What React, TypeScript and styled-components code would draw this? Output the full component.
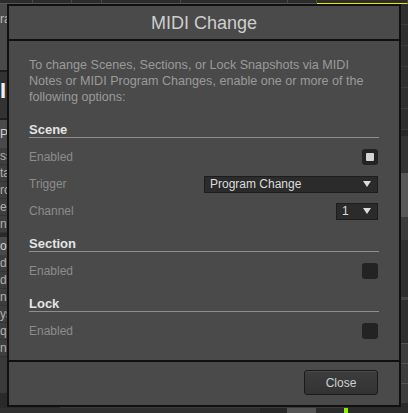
import React from "react";
import styled, { createGlobalStyle } from "styled-components";

const Global = createGlobalStyle`
  html, body { margin: 0; padding: 0; background: #2a2a2a; }
  body { font-family: "Liberation Sans", Arial, sans-serif; }
  * { box-sizing: border-box; }
`;

const Screen = styled.div`
  position: relative;
  width: 408px;
  height: 413px;
  overflow: hidden;
  display: grid;
  grid-template-rows: 4px 1fr 5px;
  background: #2a2a2a;
`;

/* ---------- background app ---------- */
const TopBar = styled.div`
  display: flex;
`;
const TopSeg = styled.div<{ $w: number; $accent?: boolean }>`
  width: ${(p) => p.$w}px;
  flex: ${(p) => (p.$w ? "none" : "1")};
  background: #2c2c2c;
  border-right: 1px solid #4a4a4a;
  border-bottom: 1px solid ${(p) => (p.$accent ? "#f2e600" : "#555")};
`;

const Main = styled.div`
  display: flex;
  min-height: 0;
`;
const LeftStrip = styled.div`
  width: 60px;
  flex: none;
  display: flex;
  flex-direction: column;
  font-size: 12px;
`;
const Panel = styled.div<{ $h: number; $bg: string; $color?: string }>`
  height: ${(p) => p.$h}px;
  flex: none;
  background: ${(p) => p.$bg};
  color: ${(p) => p.$color || "#bdbdbd"};
  display: flex;
  align-items: center;
  overflow: hidden;
  white-space: nowrap;
`;
const TopPanelText = styled(Panel)`
  align-items: flex-start;
  padding-top: 8px;
`;
const BigGlyph = styled.span`
  font-size: 22px;
  font-weight: bold;
  color: #f0f0f0;
  margin-top: -8px;
`;
const ListRow = styled.div`
  height: 17px;
  flex: none;
  background: #3e3e3e;
  border-bottom: 1px solid #333;
  color: #b0b0b0;
  display: flex;
  align-items: center;
  overflow: hidden;
`;
const Filler = styled.div<{ $bg: string }>`
  flex: 1;
  background: ${(p) => p.$bg};
`;
const Center = styled.div`
  flex: 1;
  background: #3a3a3a;
`;
const RightStrip = styled.div`
  width: 60px;
  flex: none;
  display: flex;
  flex-direction: column;
  font-size: 12px;
`;
const TrackRow = styled.div`
  height: 21px;
  flex: none;
  background: #2e2e2e;
  border-bottom: 1px solid #3b3b3b;
`;
const RightRow = styled.div`
  height: 20px;
  flex: none;
  background: #3d3d3d;
  border-top: 1px solid #555;
  color: #e0e0e0;
  font-size: 13px;
  display: flex;
  align-items: center;
  padding-left: 194px;
`;
const RightText = styled(Panel)<{ $top?: boolean }>`
  padding-left: 194px;
  align-items: ${(p) => (p.$top ? "flex-start" : "center")};
  padding-top: ${(p) => (p.$top ? "3px" : "0")};
`;

const BottomBar = styled.div`
  display: flex;
`;
const BottomSeg = styled.div<{ $w?: number; $bg: string }>`
  width: ${(p) => (p.$w ? `${p.$w}px` : "auto")};
  flex: ${(p) => (p.$w ? "none" : "1")};
  background: ${(p) => p.$bg};
`;

/* ---------- dialog ---------- */
const Dialog = styled.div`
  position: absolute;
  left: 7px;
  top: 4px;
  width: 394px;
  height: 403px;
  border: 2px solid #101010;
  background: #4a4a4a;
  display: flex;
  flex-direction: column;
`;
const TitleBar = styled.div`
  height: 35px;
  flex: none;
  border-bottom: 2px solid #101010;
  display: flex;
  align-items: center;
  justify-content: center;
  font-size: 18px;
  color: #cdcdcd;
  padding-top: 1px;
`;
const Body = styled.div`
  flex: 1;
  display: flex;
  flex-direction: column;
  gap: 15px;
  padding: 16px 20px 0 20px;
`;
const Intro = styled.p`
  margin: 0;
  font-size: 12.6px;
  line-height: 16px;
  color: #9a9a9a;
`;
const Section = styled.section`
  display: flex;
  flex-direction: column;
  gap: 11px;
`;
const Heading = styled.h3`
  margin: 0;
  height: 18px;
  font-size: 13px;
  font-weight: bold;
  line-height: 17px;
  color: #e4e4e4;
  border-bottom: 1px solid #8e8e8e;
  padding-top: 1px;
`;
const Row = styled.div`
  height: 16px;
  display: flex;
  align-items: center;
  justify-content: space-between;
`;
const Label = styled.span`
  font-size: 12px;
  color: #8c8c8c;
`;
const Check = styled.div<{ $on?: boolean }>`
  width: 16px;
  height: 16px;
  margin-right: 1px;
  border-radius: 3px;
  background: #232323;
  display: flex;
  align-items: center;
  justify-content: center;
  &::after {
    content: "";
    width: 8px;
    height: 8px;
    border-radius: 1px;
    background: ${(p) => (p.$on ? "#d4d4d4" : "transparent")};
  }
`;
const Select = styled.div<{ $w: number }>`
  width: ${(p) => p.$w}px;
  height: 17px;
  margin-right: 1px;
  background: #2b2b2b;
  border: 1px solid #1d1d1d;
  color: #dcdcdc;
  font-size: 12px;
  display: flex;
  align-items: center;
  justify-content: space-between;
  padding: 0 6px 0 5px;
`;
const Arrow = styled.span`
  width: 0;
  height: 0;
  border-left: 4px solid transparent;
  border-right: 4px solid transparent;
  border-top: 6px solid #dcdcdc;
`;
const Footer = styled.div`
  height: 45px;
  flex: none;
  border-top: 2px solid #101010;
  display: flex;
  justify-content: flex-end;
  align-items: flex-start;
  padding: 8px 21px 0 0;
`;
const Button = styled.button`
  width: 74px;
  height: 25px;
  border: 1px solid #1a1a1a;
  border-radius: 3px;
  background: linear-gradient(#3d3d3d, #333333);
  box-shadow: inset 0 1px 0 rgba(255, 255, 255, 0.07);
  color: #cfcfcf;
  font-family: "Liberation Sans", Arial, sans-serif;
  font-size: 12px;
  padding: 0;
`;

export default function App() {
  return (
    <>
      <Global />
      <Screen>
        <TopBar>
          <TopSeg $w={33} />
          <TopSeg $w={39} />
          <TopSeg $w={30} />
          <TopSeg $w={79} />
          <TopSeg $w={107} />
          <TopSeg $w={29} />
          <TopSeg $w={0} $accent />
        </TopBar>
        <Main>
          <LeftStrip>
            <TopPanelText $h={66} $bg="#4a4a4a">ra</TopPanelText>
            <Panel $h={2} $bg="#1e1e1e" />
            <Panel $h={46} $bg="#333333">
              <BigGlyph>II</BigGlyph>
            </Panel>
            <Panel $h={2} $bg="#1e1e1e" />
            <Panel $h={28} $bg="#4a4a4a" $color="#d0d0d0">PE</Panel>
            <ListRow>ss</ListRow>
            <ListRow>ta</ListRow>
            <ListRow>rc</ListRow>
            <ListRow>ec</ListRow>
            <ListRow>nt</ListRow>
            <Panel $h={4} $bg="#2a2a2a" />
            <Panel $h={18} $bg="#4a4a4a" $color="#d0d0d0">oD</Panel>
            <ListRow>di</ListRow>
            <ListRow>de</ListRow>
            <ListRow>ng</ListRow>
            <ListRow>ys</ListRow>
            <ListRow>qu</ListRow>
            <ListRow>nt</ListRow>
            <Panel $h={36} $bg="#3a3a3a" />
            <Filler $bg="#2a2a2a" />
          </LeftStrip>
          <Center />
          <RightStrip>
            <TrackRow />
            <TrackRow />
            <TrackRow />
            <TrackRow />
            <TrackRow />
            <TrackRow />
            <Panel $h={6} $bg="#262626" />
            <Panel $h={37} $bg="#333333" />
            <RightText $h={44} $bg="#585858" $color="#b8b8b8" $top>uL</RightText>
            <RightText $h={23} $bg="#3c3c3c" $color="#f0f0f0">V:</RightText>
            <Panel $h={57} $bg="#2e2e2e" />
            <Panel $h={3} $bg="#454545" />
            <Panel $h={43} $bg="#2e2e2e" />
            <RightRow>0</RightRow>
            <RightRow>n</RightRow>
            <RightRow>0</RightRow>
            <Filler $bg="#2a2a2a" />
          </RightStrip>
        </Main>
        <BottomBar>
          <BottomSeg $w={260} $bg="#303030" />
          <BottomSeg $w={27} $bg="#272727" />
          <BottomSeg $w={29} $bg="#545454" />
          <BottomSeg $w={28} $bg="#2b2b2b" />
          <BottomSeg $w={4} $bg="#8cf000" />
          <BottomSeg $bg="#2b2b2b" />
        </BottomBar>

        <Dialog>
          <TitleBar>MIDI Change</TitleBar>
          <Body>
            <Intro>
              To change Scenes, Sections, or Lock Snapshots via MIDI
              <br />
              Notes or MIDI Program Changes, enable one or more of the
              <br />
              following options:
            </Intro>
            <Section>
              <Heading>Scene</Heading>
              <Row>
                <Label>Enabled</Label>
                <Check $on />
              </Row>
              <Row>
                <Label>Trigger</Label>
                <Select $w={174}>
                  Program Change
                  <Arrow />
                </Select>
              </Row>
              <Row>
                <Label>Channel</Label>
                <Select $w={42}>
                  1
                  <Arrow />
                </Select>
              </Row>
            </Section>
            <Section>
              <Heading>Section</Heading>
              <Row>
                <Label>Enabled</Label>
                <Check />
              </Row>
            </Section>
            <Section>
              <Heading>Lock</Heading>
              <Row>
                <Label>Enabled</Label>
                <Check />
              </Row>
            </Section>
          </Body>
          <Footer>
            <Button>Close</Button>
          </Footer>
        </Dialog>
      </Screen>
    </>
  );
}
